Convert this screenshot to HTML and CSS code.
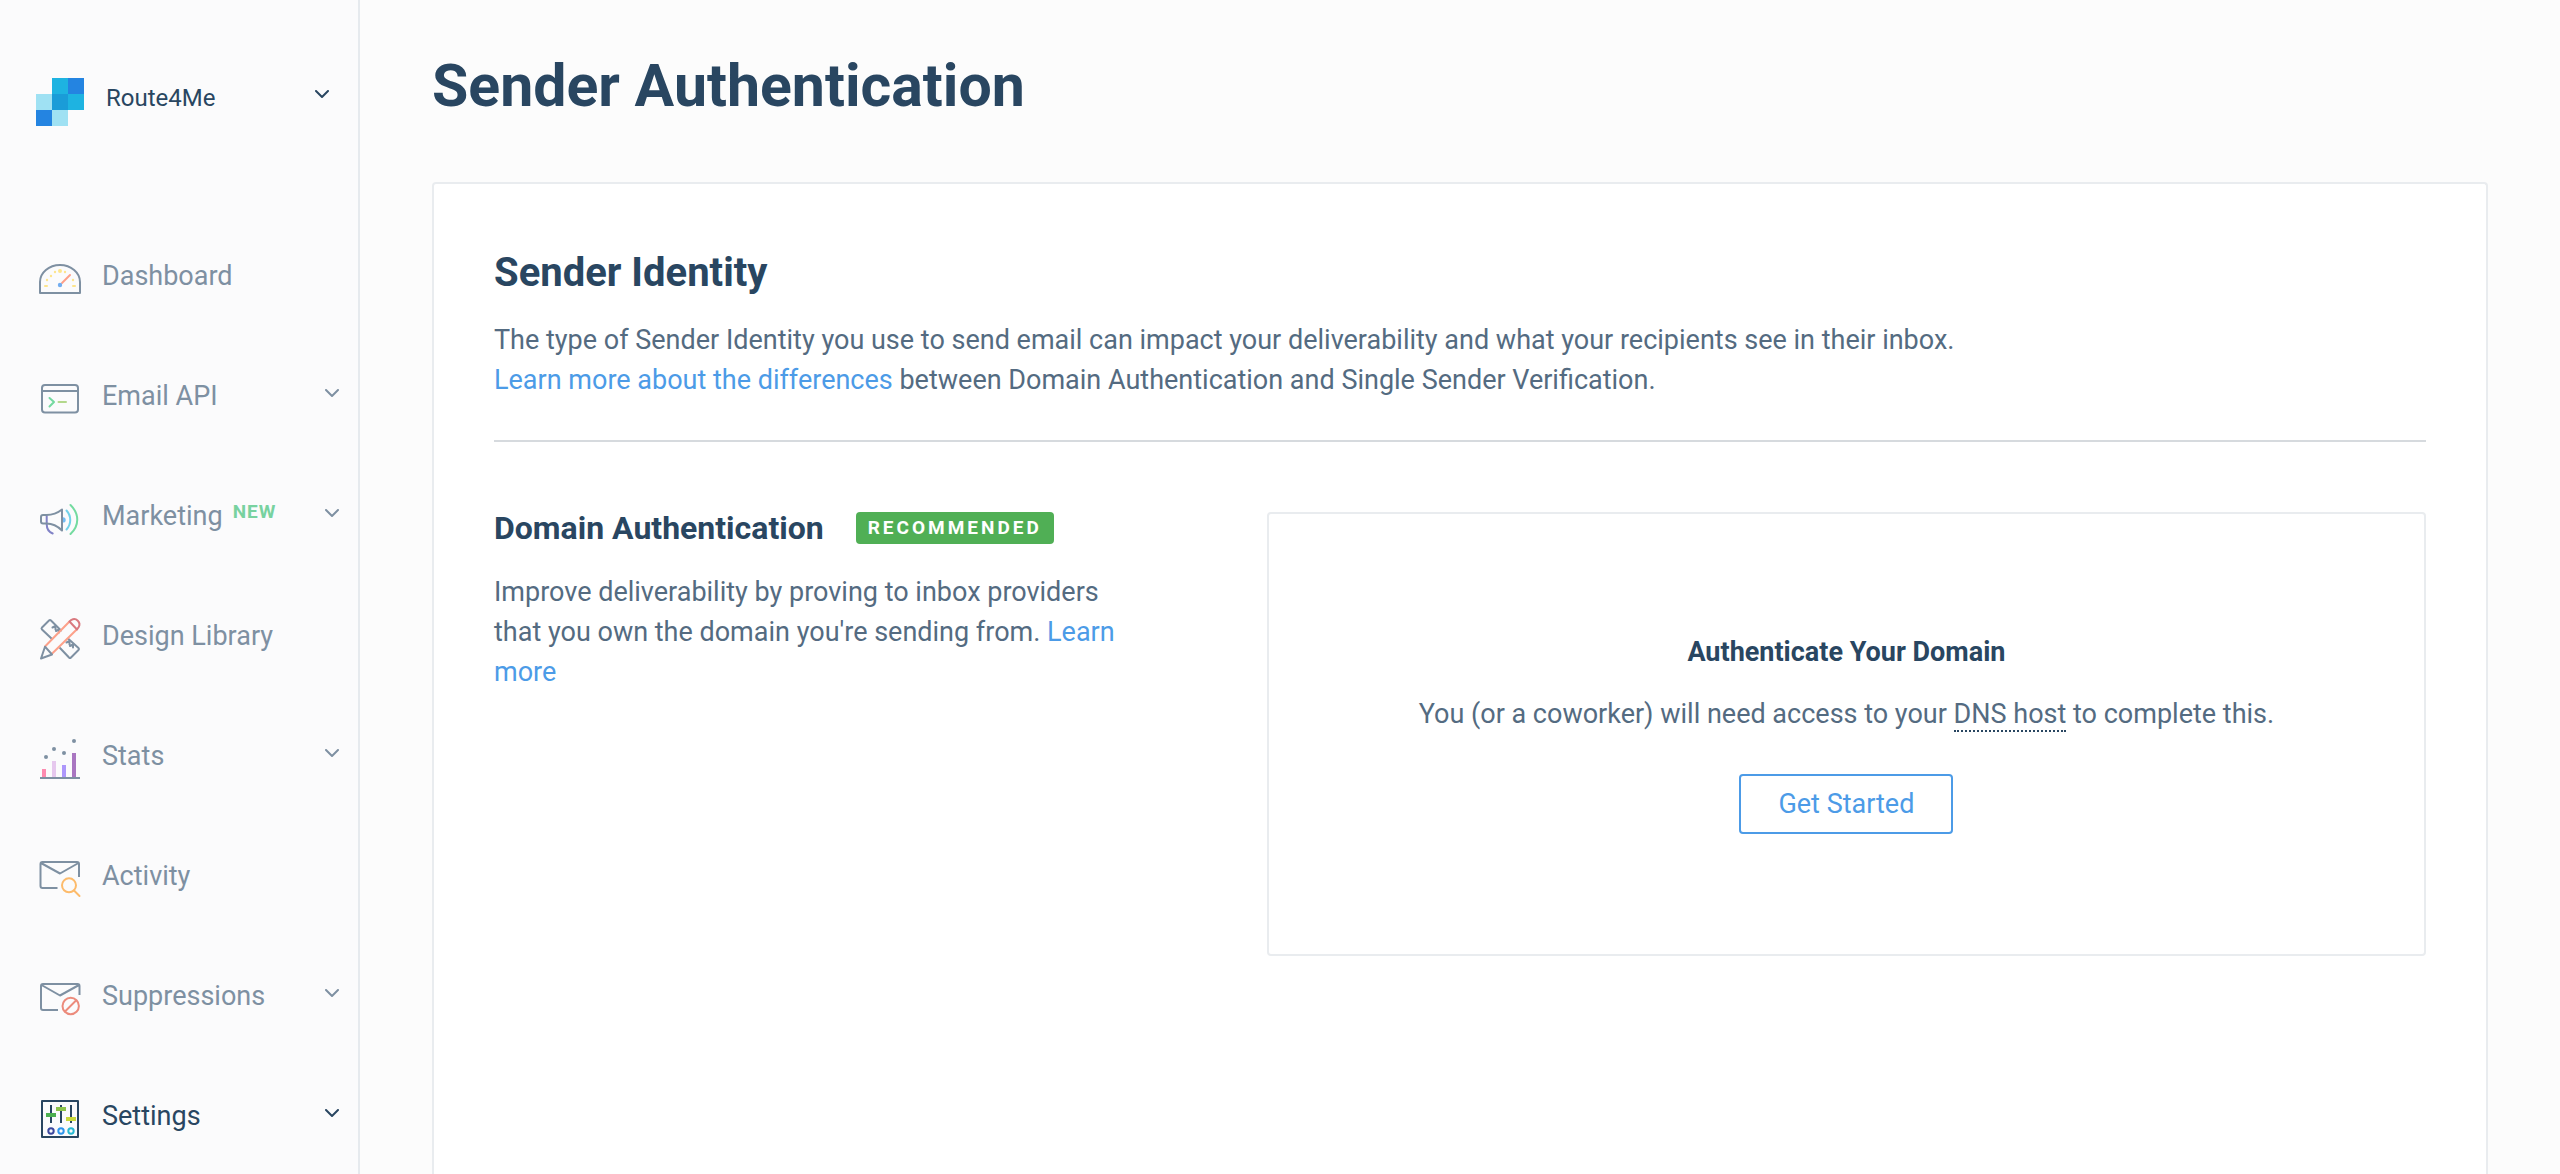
FILE: index.html
```html
<!DOCTYPE html>
<html lang="en">
<head>
<meta charset="utf-8">
<title>Sender Authentication</title>
<link rel="stylesheet" href="styles.css">
</head>
<body>
<div class="app">
  <aside class="sidebar">
    <button class="account" type="button">
      <svg class="logo" viewBox="0 0 48 48" aria-hidden="true">
        <path fill="#9fe1f3" d="M0 16h16v16H0zM16 32h16v16H16z"/>
        <path fill="#2484e1" d="M32 0h16v16H32zM0 32h16v16H0z"/>
        <path fill="#1eb3e1" d="M16 0h16v16H16zM32 16h16v16H32z"/>
        <path fill="#1a9cd8" d="M16 16h16v16H16z"/>
      </svg>
      <span class="account-name">Route4Me</span>
      <svg class="chevron" viewBox="0 0 14 14" aria-hidden="true"><path d="M1 1l6 6 6-6"/></svg>
    </button>
    <nav class="nav" aria-label="Main">
      <a class="nav-item" href="#dashboard">
        <svg class="icon" viewBox="0 0 48 48" aria-hidden="true">
          <path d="M4 41V30a20 17 0 0 1 40 0v11z"/>
          <g class="solid" fill="#fde58d"><circle cx="24" cy="19" r="2"/><circle cx="19" cy="20" r="1.200"/><circle cx="29" cy="20" r="1.200"/><circle cx="15" cy="24" r="1.200"/><circle cx="11" cy="28" r="1.200"/><circle cx="37" cy="28" r="1.200"/><rect x="8" y="33" width="4" height="2" rx="1"/><rect x="36" y="33" width="4" height="2" rx="1"/></g>
          <path stroke="#fd9f88" d="M26 31l8-8"/>
          <circle class="solid" fill="#73aef0" cx="24" cy="33" r="2.200"/>
        </svg>
        <span class="nav-label">Dashboard</span>
      </a>
      <a class="nav-item" href="#email-api">
        <svg class="icon" viewBox="0 0 48 48" aria-hidden="true">
          <rect x="6" y="13" width="36" height="27.500" rx="3"/>
          <path d="M6 19h36"/>
          <path stroke="#74d9a0" d="M13.500 26l4.500 4-4.500 4.500"/>
          <path stroke="#b3d88c" d="M22.500 30H30"/>
        </svg>
        <span class="nav-label">Email API</span>
        <svg class="chevron" viewBox="0 0 14 14" aria-hidden="true"><path d="M1 1l6 6 6-6"/></svg>
      </a>
      <a class="nav-item" href="#marketing">
        <svg class="icon" viewBox="0 0 48 48" aria-hidden="true">
          <path stroke="#8182c6" d="M10.700 24v8c0 4.500 2 8 6 9.500"/>
          <path d="M10.500 23H7a2 2 0 0 0-2 2v4.500a2 2 0 0 0 2 2h3.500c6 0 11 2.500 15.500 7V17.500c-5 4-10 5.500-15.500 5.500z"/>
          <path class="solid" fill="#73bdf5" d="M27 25.200a2.700 2.700 0 0 1 0 5.400z"/>
          <path stroke="#72d2ea" d="M30.500 18.500c5 5.500 5 13.500 0 19"/>
          <path stroke="#74dba0" d="M34.500 13c9 9 9 20.500 0 29"/>
        </svg>
        <span class="nav-label">Marketing</span>
        <span class="nav-tag">NEW</span>
        <svg class="chevron" viewBox="0 0 14 14" aria-hidden="true"><path d="M1 1l6 6 6-6"/></svg>
      </a>
      <a class="nav-item" href="#design-library">
        <svg class="icon" viewBox="0 0 48 48" aria-hidden="true">
          <path d="M16 27L6 17.500q-1-1 0-2L13 8.500q1-1 2 0L25 18.500M24 36l9 9.500q1 1 2 0l7.500-7.500q1-1 0-2L32.500 27"/>
          <path d="M16.500 15.500l3-1.500v3.500M20 19l3-1.500v3M30.500 30.500l3-1.500v3.500M34 34l3-1.500v3"/>
          <path stroke="#fda18a" d="M9 34.500L33.500 9.500M15.700 42l25-24.500"/>
          <path stroke="#d9797f" d="M33.500 9.500l7.500 8 1.700-2.500a5.300 5.300 0 0 0-7.200-7.200z"/>
          <path d="M9 34.700L5 46.500l11-4z"/>
        </svg>
        <span class="nav-label">Design Library</span>
      </a>
      <a class="nav-item" href="#stats">
        <svg class="icon" viewBox="0 0 48 48" aria-hidden="true">
          <g class="solid"><path fill="#fd8bb0" d="M6 37h4v8H6z"/><path fill="#e6c8ee" d="M16 29h4v16h-4z"/><path fill="#ad97fb" d="M26 33h4v12h-4z"/><path fill="#a976c1" d="M36 21h4v24h-4z"/><path fill="#7e90a2" d="M4 45h40v2H4z"/></g>
          <g class="solid" fill="#7e90a2"><circle cx="10" cy="25" r="2"/><circle cx="18" cy="17" r="2"/><circle cx="28" cy="21" r="2"/><circle cx="38" cy="9" r="2"/></g>
        </svg>
        <span class="nav-label">Stats</span>
        <svg class="chevron" viewBox="0 0 14 14" aria-hidden="true"><path d="M1 1l6 6 6-6"/></svg>
      </a>
      <a class="nav-item" href="#activity">
        <svg class="icon" viewBox="0 0 48 48" aria-hidden="true">
          <path stroke-linecap="butt" d="M21.500 36H6.500q-2 0-2-2V12q0-2 2-2H41q2 0 2 2v13M5 11l19 10.500L42.500 11"/>
          <g stroke="#fdbb6b"><circle cx="33" cy="33.300" r="7"/><path d="M38 38.500l5.500 5.500"/></g>
        </svg>
        <span class="nav-label">Activity</span>
      </a>
      <a class="nav-item" href="#suppressions">
        <svg class="icon" viewBox="0 0 48 48" aria-hidden="true">
          <path stroke-linecap="butt" d="M22 38H7q-2 0-2-2V14q0-2 2-2h34.500q2 0 2 2v9M5.500 13L24 23.500 43 13"/>
          <g stroke="#ec8b7c"><circle cx="34.700" cy="34" r="8.200"/><path d="M29 39.500l11-11"/></g>
        </svg>
        <span class="nav-label">Suppressions</span>
        <svg class="chevron" viewBox="0 0 14 14" aria-hidden="true"><path d="M1 1l6 6 6-6"/></svg>
      </a>
      <a class="nav-item active" href="#settings" aria-current="page">
        <svg class="icon" viewBox="0 0 48 48" aria-hidden="true">
          <rect x="6" y="9" width="36" height="36"/>
          <path stroke-linecap="butt" d="M15 13v18M25 13v18M35 13v18"/>
          <g class="solid"><path fill="#4caf50" d="M10 21h10v4H10z"/><path fill="#8bc34a" d="M20 15h10v4H20z"/><path fill="#c9d93b" d="M30 25h10v4H30z"/></g>
          <circle stroke="#3b489f" cx="15" cy="39" r="2.700"/><circle stroke="#2f95ec" cx="25" cy="39" r="2.700"/><circle stroke="#27b9d3" cx="35" cy="39" r="2.700"/>
        </svg>
        <span class="nav-label">Settings</span>
        <svg class="chevron" viewBox="0 0 14 14" aria-hidden="true"><path d="M1 1l6 6 6-6"/></svg>
      </a>
    </nav>
  </aside>
  <main class="main">
    <h1 class="page-title">Sender Authentication</h1>
    <section class="card">
      <h2 class="card-title">Sender Identity</h2>
      <p class="text">The type of Sender Identity you use to send email can impact your deliverability and what your recipients see in their inbox.<br><a class="link" href="#differences">Learn more about the differences</a> between Domain Authentication and Single Sender Verification.</p>
      <hr class="divider">
      <div class="columns">
        <div class="intro">
          <div class="intro-head">
            <h3 class="intro-title">Domain Authentication</h3>
            <span class="badge">RECOMMENDED</span>
          </div>
          <p class="text">Improve deliverability by proving to inbox providers that you own the domain you're sending from. <a class="link" href="#learn-more">Learn more</a></p>
        </div>
        <div class="panel">
          <h4 class="panel-title">Authenticate Your Domain</h4>
          <p class="text">You (or a coworker) will need access to your <span class="term">DNS host</span> to complete this.</p>
          <button class="button" type="button">Get Started</button>
        </div>
      </div>
    </section>
  </main>
</div>
</body>
</html>
```
FILE: styles.css
```css
* {
  box-sizing: border-box;
}

body {
  margin: 0;
  background: #fcfcfc;
  color: #546b81;
  font: 400 27px/40px Roboto, "Liberation Sans", sans-serif;
}

h1, h2, h3, h4, p {
  margin: 0;
}

.app {
  display: flex;
  min-height: 100vh;
}

/* Sidebar */
.sidebar {
  position: sticky;
  top: 0;
  flex: none;
  width: 360px;
  height: 100vh;
  overflow: hidden;
  background: #fbfbfc;
  border-right: 2px solid #e6eaee;
}

.account {
  display: flex;
  align-items: flex-start;
  width: 100%;
  margin-bottom: 90px;
  padding: 78px 29px 0 36px;
  border: 0;
  background: none;
  color: #294661;
  font: 400 24px/40px Roboto, "Liberation Sans", sans-serif;
  text-align: left;
}

.account .chevron {
  margin-top: 12px;
}

.logo {
  flex: none;
  width: 48px;
  height: 48px;
  margin-right: 22px;
}

.nav-item {
  display: flex;
  align-items: center;
  height: 120px;
  padding: 0 19px 0 36px;
  color: #7e90a2;
  text-decoration: none;
}

.nav-item.active {
  color: #294661;
}

.icon {
  flex: none;
  width: 48px;
  height: 48px;
  margin-right: 18px;
  fill: none;
  stroke: currentColor;
  stroke-width: 2;
  stroke-linecap: round;
  stroke-linejoin: round;
}

.solid {
  stroke: none;
}

.nav-tag {
  margin: 0 0 8px 10px;
  color: #78d2a0;
  font-size: 19px;
  font-weight: 700;
  line-height: 32px;
  letter-spacing: 1px;
}

.chevron {
  flex: none;
  width: 14px;
  height: 14px;
  margin-left: auto;
  fill: none;
  stroke: currentColor;
  stroke-width: 2;
  stroke-linecap: round;
  stroke-linejoin: round;
}

/* Content */
.main {
  display: flex;
  flex: 1;
  flex-direction: column;
  min-width: 0;
  padding: 50px 72px 0;
}

.page-title {
  margin-bottom: 60px;
  color: #294661;
  font-size: 59px;
  font-weight: 700;
  line-height: 72px;
}

.card {
  flex: 1;
  padding: 64px 60px;
  border: 2px solid #e9ecef;
  border-bottom: 0;
  border-radius: 4px 4px 0 0;
  background: #fff;
}

.card-title {
  margin-bottom: 22px;
  color: #294661;
  font-size: 40px;
  font-weight: 700;
  line-height: 50px;
}

.link {
  color: #4c9be7;
  text-decoration: none;
}

.divider {
  height: 2px;
  margin: 40px 0 70px;
  border: 0;
  background: #d6dade;
}

.columns {
  display: flex;
  justify-content: space-between;
  align-items: flex-start;
}

.intro {
  width: 33%;
}

.intro-head {
  display: flex;
  align-items: center;
  gap: 32px;
  margin-bottom: 28px;
}

.intro-title {
  color: #294661;
  font-size: 32px;
  font-weight: 700;
  line-height: 32px;
  white-space: nowrap;
}

.badge {
  padding: 0 12px;
  border-radius: 4px;
  background: #50af55;
  color: #fff;
  font-size: 19px;
  font-weight: 700;
  line-height: 32px;
  letter-spacing: 3px;
}

.panel {
  display: flex;
  flex-direction: column;
  align-items: center;
  width: 60%;
  padding: 118px 24px 120px;
  border: 2px solid #e9ecef;
  border-radius: 4px;
  text-align: center;
}

.panel-title {
  margin-bottom: 22px;
  color: #294661;
  font-size: 27px;
  font-weight: 700;
}

.term {
  border-bottom: 2px dotted #294661;
}

.button {
  height: 60px;
  margin-top: 40px;
  padding: 0 37px;
  border: 2px solid #4c9be7;
  border-radius: 4px;
  background: #fff;
  color: #4c9be7;
  font: inherit;
}
```
